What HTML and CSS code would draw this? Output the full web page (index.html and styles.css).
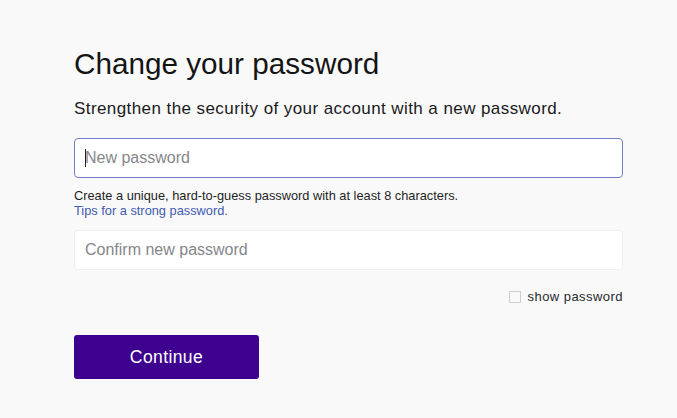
FILE: index.html
```html
<!DOCTYPE html>
<html lang="en">
<head>
<meta charset="utf-8">
<title>Change your password</title>
<link rel="stylesheet" href="styles.css">
</head>
<body>
<main class="page">
  <form class="form">
    <h1 class="title">Change your password</h1>
    <p class="subtitle">Strengthen the security of your account with a new password.</p>
    <div class="field field-focus">
      <input class="input input-active" type="password" placeholder="New password">
      <span class="caret"></span>
    </div>
    <p class="help">Create a unique, hard-to-guess password with at least 8 characters.<br><a class="help-link" href="#">Tips for a strong password.</a></p>
    <div class="field">
      <input class="input" type="password" placeholder="Confirm new password">
    </div>
    <div class="show-row">
      <label class="show-label"><span class="checkbox"></span>show password</label>
    </div>
    <button class="btn" type="button">Continue</button>
  </form>
</main>
</body>
</html>
```
FILE: styles.css
```css
html, body {
  margin: 0;
  padding: 0;
  background: #f9f9fa;
}
body {
  font-family: "Liberation Sans", Arial, sans-serif;
  color: #1d1d1f;
}
.page {
  padding: 46px 0 0 74px;
}
.form {
  width: 549px;
}
.title {
  margin: 0;
  font-size: 29.7px;
  line-height: 36px;
  font-weight: normal;
  color: #141414;
}
.subtitle {
  margin: 17px 0 0;
  font-size: 17px;
  line-height: 20px;
  letter-spacing: 0.42px;
  color: #1a1a1a;
}
.field {
  position: relative;
  margin-top: 19px;
}
.input {
  display: block;
  box-sizing: border-box;
  width: 549px;
  height: 40px;
  margin: 0;
  padding: 0 10px;
  border: 1px solid #efeff0;
  border-radius: 4px;
  background: #ffffff;
  font-family: "Liberation Sans", Arial, sans-serif;
  font-size: 16px;
  color: #222;
  outline: none;
}
.input::placeholder {
  color: #86868a;
  opacity: 1;
}
.input-active {
  border-color: #7180c0;
}
.caret {
  position: absolute;
  left: 11px;
  top: 11px;
  width: 1px;
  height: 18px;
  background: #222;
}
.help {
  margin: 10px 0 0;
  font-size: 12.8px;
  line-height: 15px;
  color: #1f1f1f;
}
.help-link {
  color: #3e5bb0;
  text-decoration: none;
}
.help + .field {
  margin-top: 12px;
}
.show-row {
  display: flex;
  justify-content: flex-end;
  margin-top: 19px;
}
.show-label {
  display: flex;
  align-items: center;
  font-size: 13px;
  line-height: 15px;
  letter-spacing: 0.45px;
  color: #26282a;
}
.checkbox {
  box-sizing: border-box;
  width: 12px;
  height: 12px;
  margin-right: 7px;
  border: 1px solid #cfcfd2;
  background: #f9f9fa;
}
.btn {
  display: block;
  width: 185px;
  height: 44px;
  margin-top: 31px;
  padding: 0;
  border: none;
  border-radius: 3px;
  background: #3d008f;
  color: #ffffff;
  font-family: "Liberation Sans", Arial, sans-serif;
  font-size: 17.5px;
  letter-spacing: 0.4px;
}
```
